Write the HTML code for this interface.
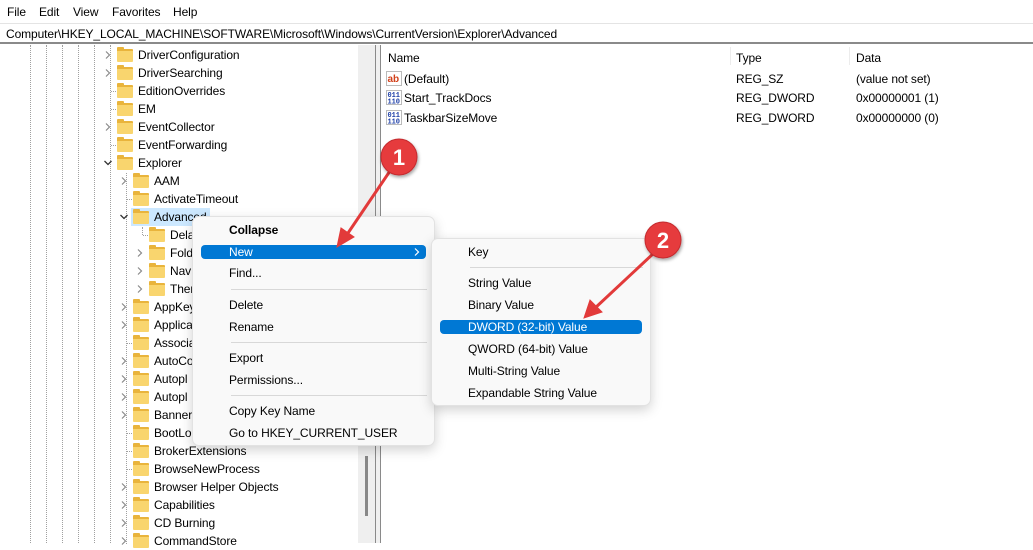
<!DOCTYPE html>
<html><head><meta charset="utf-8"><style>
*{margin:0;padding:0;box-sizing:border-box}
body{width:1033px;height:543px;overflow:hidden;background:#fff;font-family:"Liberation Sans",sans-serif;font-size:12px;letter-spacing:-0.1px;color:#000;position:relative}
.a{position:absolute;white-space:nowrap}
.r{position:absolute;height:18px;line-height:18px;white-space:nowrap}
.f{position:absolute;width:16px;height:13px;top:3px;background:#f9d56e;border-radius:1px;border-top:2px solid #e9b43c}
.f:before{content:"";position:absolute;left:0;top:-4px;width:7px;height:3px;background:#e9b43c;border-radius:1px 1px 0 0}
.c{position:absolute;top:5px;width:8px;height:8px}
.vd{position:absolute;width:1px;border-left:1px dotted #a0a0a0}
.hd{position:absolute;height:1px;border-top:1px dotted #a0a0a0;width:7px}
.menu{position:absolute;background:#f9f9f9;border:1px solid #e2e2e2;border-radius:7px;box-shadow:0 4px 12px rgba(0,0,0,.18)}
.mi{position:absolute;white-space:nowrap;line-height:14px}
.sep{position:absolute;height:1px;background:#d8d8d8}
.hl{position:absolute;background:#0078d4;border-radius:4px}
#tree{position:absolute;left:0;top:1px;width:358px;height:543px}
</style></head><body>
<div class="a" style="left:7px;top:5px">File</div>
<div class="a" style="left:39px;top:5px">Edit</div>
<div class="a" style="left:73px;top:5px">View</div>
<div class="a" style="left:112px;top:5px">Favorites</div>
<div class="a" style="left:173px;top:5px">Help</div>
<div class="a" style="left:0;top:23px;width:1033px;height:21px;border-top:1px solid #e4e4e4;border-bottom:2px solid #8a8a8a"></div>
<div class="a" style="left:6px;top:27px">Computer\HKEY_LOCAL_MACHINE\SOFTWARE\Microsoft\Windows\CurrentVersion\Explorer\Advanced</div>

<div class="a" style="left:358px;top:45px;width:18px;height:498px;background:#efefef"></div>
<div class="a" style="left:365px;top:456px;width:3px;height:60px;background:#888"></div>
<div class="a" style="left:375px;top:45px;width:1px;height:498px;background:#8a8a8a"></div>
<div class="a" style="left:376px;top:45px;width:4px;height:498px;background:#f0f0f0"></div>
<div class="a" style="left:380px;top:45px;width:1px;height:498px;background:#8a8a8a"></div>

<svg width="0" height="0" style="position:absolute"><defs>
<symbol id="cr" viewBox="0 0 8 8"><polyline points="2,0.5 5.5,4 2,7.5" fill="none" stroke="#8a8a8a" stroke-width="1.2"/></symbol>
<symbol id="cd" viewBox="0 0 8 8"><polyline points="0.5,2 4,5.5 7.5,2" fill="none" stroke="#333" stroke-width="1.3"/></symbol>
</defs></svg>

<div id="tree">
<div class="vd" style="left:30px;top:44px;height:498px"></div>
<div class="vd" style="left:46px;top:44px;height:498px"></div>
<div class="vd" style="left:62px;top:44px;height:498px"></div>
<div class="vd" style="left:78px;top:44px;height:498px"></div>
<div class="vd" style="left:94px;top:44px;height:498px"></div>
<div class="vd" style="left:110px;top:44px;height:498px"></div>
<div class="vd" style="left:126px;top:172px;height:371px"></div>
<div class="vd" style="left:142px;top:226px;height:8px"></div>
<div class="hd" style="left:111px;top:90px"></div>
<div class="hd" style="left:111px;top:108px"></div>
<div class="hd" style="left:111px;top:144px"></div>
<div class="hd" style="left:127px;top:198px"></div>
<div class="hd" style="left:143px;top:234px"></div>
<div class="hd" style="left:127px;top:342px"></div>
<div class="hd" style="left:127px;top:432px"></div>
<div class="hd" style="left:127px;top:450px"></div>
<div class="hd" style="left:127px;top:468px"></div>

<div class="a" style="left:131px;top:207px;width:79px;height:18px;background:#cce8ff"></div>

<div class="r" style="top:45px"><svg class="c" style="left:104px"><use href="#cr"/></svg><div class="f" style="left:117px"></div><span class="a" style="left:138px">DriverConfiguration</span></div>
<div class="r" style="top:63px"><svg class="c" style="left:104px"><use href="#cr"/></svg><div class="f" style="left:117px"></div><span class="a" style="left:138px">DriverSearching</span></div>
<div class="r" style="top:81px"><div class="f" style="left:117px"></div><span class="a" style="left:138px">EditionOverrides</span></div>
<div class="r" style="top:99px"><div class="f" style="left:117px"></div><span class="a" style="left:138px">EM</span></div>
<div class="r" style="top:117px"><svg class="c" style="left:104px"><use href="#cr"/></svg><div class="f" style="left:117px"></div><span class="a" style="left:138px">EventCollector</span></div>
<div class="r" style="top:135px"><div class="f" style="left:117px"></div><span class="a" style="left:138px">EventForwarding</span></div>
<div class="r" style="top:153px"><svg class="c" style="left:104px"><use href="#cd"/></svg><div class="f" style="left:117px"></div><span class="a" style="left:138px">Explorer</span></div>
<div class="r" style="top:171px"><svg class="c" style="left:120px"><use href="#cr"/></svg><div class="f" style="left:133px"></div><span class="a" style="left:154px">AAM</span></div>
<div class="r" style="top:189px"><div class="f" style="left:133px"></div><span class="a" style="left:154px">ActivateTimeout</span></div>
<div class="r" style="top:207px"><svg class="c" style="left:120px"><use href="#cd"/></svg><div class="f" style="left:133px"></div><span class="a" style="left:154px">Advanced</span></div>
<div class="r" style="top:225px"><div class="f" style="left:149px"></div><span class="a" style="left:170px">Dela</span></div>
<div class="r" style="top:243px"><svg class="c" style="left:136px"><use href="#cr"/></svg><div class="f" style="left:149px"></div><span class="a" style="left:170px">Fold</span></div>
<div class="r" style="top:261px"><svg class="c" style="left:136px"><use href="#cr"/></svg><div class="f" style="left:149px"></div><span class="a" style="left:170px">Nav</span></div>
<div class="r" style="top:279px"><svg class="c" style="left:136px"><use href="#cr"/></svg><div class="f" style="left:149px"></div><span class="a" style="left:170px">Ther</span></div>
<div class="r" style="top:297px"><svg class="c" style="left:120px"><use href="#cr"/></svg><div class="f" style="left:133px"></div><span class="a" style="left:154px">AppKey</span></div>
<div class="r" style="top:315px"><svg class="c" style="left:120px"><use href="#cr"/></svg><div class="f" style="left:133px"></div><span class="a" style="left:154px">Applica</span></div>
<div class="r" style="top:333px"><div class="f" style="left:133px"></div><span class="a" style="left:154px">Associa</span></div>
<div class="r" style="top:351px"><svg class="c" style="left:120px"><use href="#cr"/></svg><div class="f" style="left:133px"></div><span class="a" style="left:154px">AutoCo</span></div>
<div class="r" style="top:369px"><svg class="c" style="left:120px"><use href="#cr"/></svg><div class="f" style="left:133px"></div><span class="a" style="left:154px">Autopl</span></div>
<div class="r" style="top:387px"><svg class="c" style="left:120px"><use href="#cr"/></svg><div class="f" style="left:133px"></div><span class="a" style="left:154px">Autopl</span></div>
<div class="r" style="top:405px"><svg class="c" style="left:120px"><use href="#cr"/></svg><div class="f" style="left:133px"></div><span class="a" style="left:154px">Banner</span></div>
<div class="r" style="top:423px"><div class="f" style="left:133px"></div><span class="a" style="left:154px">BootLo</span></div>
<div class="r" style="top:441px"><div class="f" style="left:133px"></div><span class="a" style="left:154px">BrokerExtensions</span></div>
<div class="r" style="top:459px"><div class="f" style="left:133px"></div><span class="a" style="left:154px">BrowseNewProcess</span></div>
<div class="r" style="top:477px"><svg class="c" style="left:120px"><use href="#cr"/></svg><div class="f" style="left:133px"></div><span class="a" style="left:154px">Browser Helper Objects</span></div>
<div class="r" style="top:495px"><svg class="c" style="left:120px"><use href="#cr"/></svg><div class="f" style="left:133px"></div><span class="a" style="left:154px">Capabilities</span></div>
<div class="r" style="top:513px"><svg class="c" style="left:120px"><use href="#cr"/></svg><div class="f" style="left:133px"></div><span class="a" style="left:154px">CD Burning</span></div>
<div class="r" style="top:531px"><svg class="c" style="left:120px"><use href="#cr"/></svg><div class="f" style="left:133px"></div><span class="a" style="left:154px">CommandStore</span></div>
</div>

<div class="a" style="left:388px;top:51px">Name</div>
<div class="a" style="left:730px;top:47px;width:1px;height:18px;background:#ececec"></div>
<div class="a" style="left:736px;top:51px">Type</div>
<div class="a" style="left:849px;top:47px;width:1px;height:18px;background:#ececec"></div>
<div class="a" style="left:856px;top:51px">Data</div>
<svg class="a" style="left:386px;top:71px" width="16" height="15"><rect x="0.5" y="0.5" width="15" height="14" fill="#fff" stroke="#bbb"/><text x="1.5" y="11" font-size="10" font-weight="bold" fill="#d2401a" font-family="Liberation Sans">ab</text></svg>
<svg class="a" style="left:386px;top:90px" width="16" height="15"><rect x="0.5" y="0.5" width="15" height="14" fill="#fff" stroke="#bbb"/><text x="1.5" y="7" font-size="7" font-weight="bold" fill="#1e3fa8" font-family="Liberation Mono">011</text><text x="1.5" y="13.5" font-size="7" font-weight="bold" fill="#1e3fa8" font-family="Liberation Mono">110</text></svg>
<svg class="a" style="left:386px;top:110px" width="16" height="15"><rect x="0.5" y="0.5" width="15" height="14" fill="#fff" stroke="#bbb"/><text x="1.5" y="7" font-size="7" font-weight="bold" fill="#1e3fa8" font-family="Liberation Mono">011</text><text x="1.5" y="13.5" font-size="7" font-weight="bold" fill="#1e3fa8" font-family="Liberation Mono">110</text></svg>
<div class="a" style="left:404px;top:72px">(Default)</div>
<div class="a" style="left:404px;top:91px">Start_TrackDocs</div>
<div class="a" style="left:404px;top:111px">TaskbarSizeMove</div>
<div class="a" style="left:736px;top:72px">REG_SZ</div>
<div class="a" style="left:736px;top:91px">REG_DWORD</div>
<div class="a" style="left:736px;top:111px">REG_DWORD</div>
<div class="a" style="left:856px;top:72px">(value not set)</div>
<div class="a" style="left:856px;top:91px">0x00000001 (1)</div>
<div class="a" style="left:856px;top:111px">0x00000000 (0)</div>

<div class="menu" style="left:192px;top:216px;width:243px;height:230px"></div>
<div class="mi" style="left:229px;top:223px;font-weight:bold">Collapse</div>
<div class="hl" style="left:201px;top:245px;width:225px;height:14px"></div>
<div class="mi" style="left:229px;top:245px;color:#fff">New</div>
<svg class="a" style="left:414px;top:248px" width="6" height="8"><polyline points="1,0.5 4.5,4 1,7.5" fill="none" stroke="#fff" stroke-width="1.2"/></svg>
<div class="mi" style="left:229px;top:266px">Find...</div>
<div class="sep" style="left:231px;top:289px;width:196px"></div>
<div class="mi" style="left:229px;top:298px">Delete</div>
<div class="mi" style="left:229px;top:320px">Rename</div>
<div class="sep" style="left:231px;top:342px;width:196px"></div>
<div class="mi" style="left:229px;top:351px">Export</div>
<div class="mi" style="left:229px;top:373px">Permissions...</div>
<div class="sep" style="left:231px;top:395px;width:196px"></div>
<div class="mi" style="left:229px;top:404px">Copy Key Name</div>
<div class="mi" style="left:229px;top:426px">Go to HKEY_CURRENT_USER</div>

<div class="menu" style="left:431px;top:238px;width:220px;height:168px"></div>
<div class="mi" style="left:468px;top:245px">Key</div>
<div class="sep" style="left:470px;top:267px;width:173px"></div>
<div class="mi" style="left:468px;top:276px">String Value</div>
<div class="mi" style="left:468px;top:298px">Binary Value</div>
<div class="hl" style="left:440px;top:320px;width:202px;height:14px"></div>
<div class="mi" style="left:468px;top:320px;color:#fff">DWORD (32-bit) Value</div>
<div class="mi" style="left:468px;top:342px">QWORD (64-bit) Value</div>
<div class="mi" style="left:468px;top:364px">Multi-String Value</div>
<div class="mi" style="left:468px;top:386px">Expandable String Value</div>

<svg class="a" style="left:0;top:0" width="1033" height="543">
<defs><filter id="sh" x="-50%" y="-50%" width="200%" height="200%"><feDropShadow dx="1" dy="2" stdDeviation="1.5" flood-opacity="0.35"/></filter></defs>
<g stroke="#e23a3a" stroke-width="3" fill="#e23a3a" stroke-linecap="round">
<line x1="392" y1="168" x2="346" y2="236"/>
<polygon points="337,247 341,228 354,237" stroke-width="1"/>
<line x1="655" y1="252" x2="594" y2="309"/>
<polygon points="584,318 590,300 602,312" stroke-width="1"/>
</g>
<circle cx="399" cy="157" r="18" fill="#e63b3e" stroke="#c42a2e" stroke-width="1" filter="url(#sh)"/>
<text x="399" y="165" text-anchor="middle" font-family="Liberation Sans" font-weight="bold" font-size="22" fill="#fff">1</text>
<circle cx="663" cy="240" r="18" fill="#e63b3e" stroke="#c42a2e" stroke-width="1" filter="url(#sh)"/>
<text x="663" y="248" text-anchor="middle" font-family="Liberation Sans" font-weight="bold" font-size="22" fill="#fff">2</text>
</svg>
</body></html>
